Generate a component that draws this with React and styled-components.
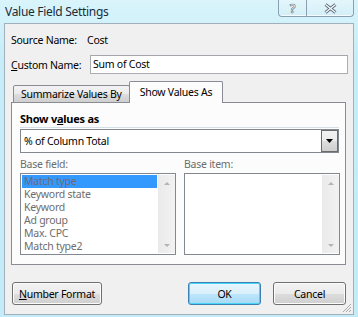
import React from "react";
import styled, { createGlobalStyle } from "styled-components";

const GlobalStyle = createGlobalStyle`
  body {
    margin: 0;
    font-family: "Noto Sans", "Open Sans", sans-serif;
    font-size: 10.5px;
    letter-spacing: -0.25px;
    color: #000;
  }
`;

const baseFields = ["Match type", "Keyword state", "Keyword", "Ad group", "Max. CPC", "Match type2"];

const App = () => {
  return (
    <Window>
      <GlobalStyle />
      <TitleBar>
        <Title>Value Field Settings</Title>
        <CaptionButtons>
          <CaptionButton $w={28}>?</CaptionButton>
          <CaptionButton $w={47} $last>
            <svg width="13" height="11" viewBox="0 0 13 11">
              <path d="M1.5 1.5 L11.5 9.5 M11.5 1.5 L1.5 9.5" stroke="#5a6a7a" strokeWidth="3" fill="none" />
              <path d="M1.5 1.5 L11.5 9.5 M11.5 1.5 L1.5 9.5" stroke="#fff" strokeWidth="1.2" fill="none" />
            </svg>
          </CaptionButton>
        </CaptionButtons>
      </TitleBar>

      <Client>
        <SourceRow>
          <Label $w={76}>Source Name:</Label>
          <span>Cost</span>
        </SourceRow>
        <NameRow>
          <Label $w={79}>
            <u>C</u>ustom Name:
          </Label>
          <TextInput>Sum of Cost</TextInput>
        </NameRow>

        <TabStrip>
          <Tab>Summarize Values By</Tab>
          <Tab $active>Show Values As</Tab>
        </TabStrip>
        <TabPanel>
          <SectionTitle>
            Show v<u>a</u>lues as
          </SectionTitle>
          <Separator />
          <Combo>
            <ComboText>% of Column Total</ComboText>
            <ComboButton>
              <svg width="7" height="4" viewBox="0 0 7 4">
                <path d="M0 0 H7 L3.5 4 Z" fill="#000" />
              </svg>
            </ComboButton>
          </Combo>
          <ListColumns>
            <ListGroup>
              <DimLabel>Base field:</DimLabel>
              <ListBox>
                <ListItems>
                  {baseFields.map((f, i) => (
                    <ListItem key={f} $selected={i === 0}>
                      {f}
                    </ListItem>
                  ))}
                </ListItems>
                <ScrollBar>
                  <ScrollArrow />
                  <ScrollArrow $down />
                </ScrollBar>
              </ListBox>
            </ListGroup>
            <ListGroup>
              <DimLabel>Base item:</DimLabel>
              <ListBox>
                <ListItems />
                <ScrollBar>
                  <ScrollArrow />
                  <ScrollArrow $down />
                </ScrollBar>
              </ListBox>
            </ListGroup>
          </ListColumns>
        </TabPanel>

        <ButtonRow>
          <Button $w={90}>
            <u>N</u>umber Format
          </Button>
          <Spacer />
          <Button $w={73} $default>
            OK
          </Button>
          <Button $w={73}>Cancel</Button>
        </ButtonRow>
        <SizeGrip>
          <svg width="10" height="10" viewBox="0 0 10 10">
            <path d="M9 1 L1 9 M9 4 L4 9 M9 7 L7 9" stroke="#a9a9a9" strokeWidth="1" />
          </svg>
        </SizeGrip>
      </Client>
    </Window>
  );
};

const Window = styled.div`
  width: 358px;
  height: 317px;
  display: flex;
  flex-direction: column;
  background: linear-gradient(#d9f4fb, #c6edf9 60px, #c4ecf8);
  box-sizing: border-box;
`;

const TitleBar = styled.div`
  height: 23px;
  display: flex;
  justify-content: space-between;
  align-items: flex-start;
  padding: 0 4px 0 5px;
  flex-shrink: 0;
`;

const Title = styled.div`
  font-size: 12px;
  letter-spacing: -0.3px;
  line-height: 24px;
  color: #1b2b3a;
`;

const CaptionButtons = styled.div`
  display: flex;
  height: 16px;
  border: 1px solid #8aa0b0;
  border-top: none;
  border-radius: 0 0 4px 4px;
  background: linear-gradient(#e4f6fb, #d3eff8);
  box-shadow: inset 0 -1px 0 #f4fbfd;
  overflow: hidden;
`;

const CaptionButton = styled.div`
  width: ${(p) => p.$w - 1}px;
  display: flex;
  align-items: center;
  justify-content: center;
  font-size: 12px;
  font-weight: bold;
  color: #fff;
  -webkit-text-stroke: 0.6px #5a6a7a;
  border-right: ${(p) => (p.$last ? "none" : "1px solid #8aa0b0")};
`;

const Client = styled.div`
  position: relative;
  flex: 1;
  margin: 0 4px 2px;
  background: #f0f0f0;
  border: 1px solid #a2b0bc;
  display: flex;
  flex-direction: column;
  padding: 0 7px 0 6px;
`;

const SourceRow = styled.div`
  display: flex;
  height: 16px;
  align-items: center;
  margin-top: 8px;
`;

const Label = styled.span`
  width: ${(p) => p.$w}px;
  flex-shrink: 0;
`;

const NameRow = styled.div`
  display: flex;
  align-items: center;
  margin-top: 7px;
`;

const TextInput = styled.div`
  flex: 1;
  height: 19px;
  box-sizing: border-box;
  margin-right: -2px;
  border: 1px solid #abadb3;
  border-top-color: #a3a6ab;
  background: #fff;
  padding: 0 2px;
  line-height: 17px;
`;

const TabStrip = styled.div`
  display: flex;
  align-items: flex-end;
  margin-top: 8px;
  padding-left: 2px;
  height: 21px;
  position: relative;
  z-index: 1;
  margin-bottom: -1px;
`;

const Tab = styled.div`
  box-sizing: border-box;
  height: ${(p) => (p.$active ? 22 : 18)}px;
  padding: ${(p) => (p.$active ? "0 10px 0 10px" : "0 7px")};
  margin-left: ${(p) => (p.$active ? -1 : 0)}px;
  border: 1px solid #898c95;
  border-bottom: ${(p) => (p.$active ? "none" : "1px solid #898c95")};
  border-radius: 2px 2px 0 0;
  background: ${(p) => (p.$active ? "#fcfcfc" : "linear-gradient(#f2f2f2, #ebebeb 50%, #dddddd 51%, #cfcfcf)")};
  line-height: ${(p) => (p.$active ? 20 : 17)}px;
  white-space: nowrap;
`;

const TabPanel = styled.div`
  height: 163px;
  box-sizing: border-box;
  border: 1px solid #898c95;
  background: #fcfcfc;
  padding: 0 6px 0 8px;
  display: flex;
  flex-direction: column;
`;

const SectionTitle = styled.div`
  font-weight: bold;
  font-size: 11px;
  margin-top: 9px;
  line-height: 14px;
`;

const Separator = styled.div`
  height: 1px;
  background: #d5dfe5;
  margin-top: 1px;
`;

const Combo = styled.div`
  margin-top: 1px;
  height: 24px;
  box-sizing: border-box;
  border: 1px solid #828790;
  background: #fff;
  display: flex;
  align-items: stretch;
`;

const ComboText = styled.div`
  flex: 1;
  padding-left: 3px;
  line-height: 22px;
`;

const ComboButton = styled.div`
  width: 17px;
  box-sizing: border-box;
  border: 1px solid #6b6b6b;
  background: linear-gradient(#f2f2f2, #ebebeb 50%, #dddddd 51%, #cfcfcf);
  display: flex;
  align-items: center;
  justify-content: center;
`;

const ListColumns = styled.div`
  display: grid;
  grid-template-columns: 156px 156px;
  column-gap: 8px;
  margin-top: 4px;
`;

const ListGroup = styled.div`
  display: flex;
  flex-direction: column;
`;

const DimLabel = styled.div`
  color: #6d6d6d;
  line-height: 14px;
  height: 16px;
`;

const ListBox = styled.div`
  height: 82px;
  box-sizing: border-box;
  border: 1px solid #828790;
  background: #fff;
  display: flex;
  padding: 1px 0 1px 1px;
`;

const ListItems = styled.div`
  flex: 1;
  display: flex;
  flex-direction: column;
`;

const ListItem = styled.div`
  height: 13px;
  line-height: 13px;
  padding-left: 2px;
  color: #6d6d6d;
  background: ${(p) => (p.$selected ? "#3399ff" : "transparent")};
  white-space: nowrap;
`;

const ScrollBar = styled.div`
  width: 17px;
  margin-left: 1px;
  background: linear-gradient(90deg, #eaeaea, #f2f2f2);
  display: flex;
  flex-direction: column;
  justify-content: space-between;
  align-items: center;
  padding: 7px 0 6px;
  box-sizing: border-box;
`;

const ScrollArrow = styled.div`
  width: 0;
  height: 0;
  border-left: 3px solid transparent;
  border-right: 3px solid transparent;
  ${(p) => (p.$down ? "border-top: 3px solid #b4b4b4;" : "border-bottom: 3px solid #b4b4b4;")}
`;

const ButtonRow = styled.div`
  display: flex;
  gap: 12px;
  margin-top: 17px;
  padding-left: 1px;
`;

const Spacer = styled.div`
  flex: 1;
`;

const Button = styled.div`
  width: ${(p) => p.$w}px;
  height: 23px;
  box-sizing: border-box;
  border: 1px solid ${(p) => (p.$default ? "#3c7fb1" : "#707070")};
  border-radius: 3px;
  background: ${(p) =>
    p.$default
      ? "linear-gradient(#eaf6fd, #d9f0fc 50%, #bee6fd 51%, #a7d9f5)"
      : "linear-gradient(#f2f2f2, #ebebeb 50%, #dddddd 51%, #cfcfcf)"};
  box-shadow: inset 0 0 0 1px ${(p) => (p.$default ? "#48d6f8" : "#fcfcfc")};
  display: flex;
  align-items: center;
  justify-content: center;
`;

const SizeGrip = styled.div`
  position: absolute;
  right: 1px;
  bottom: 1px;
  width: 10px;
  height: 10px;
  display: flex;
`;

export default App;
